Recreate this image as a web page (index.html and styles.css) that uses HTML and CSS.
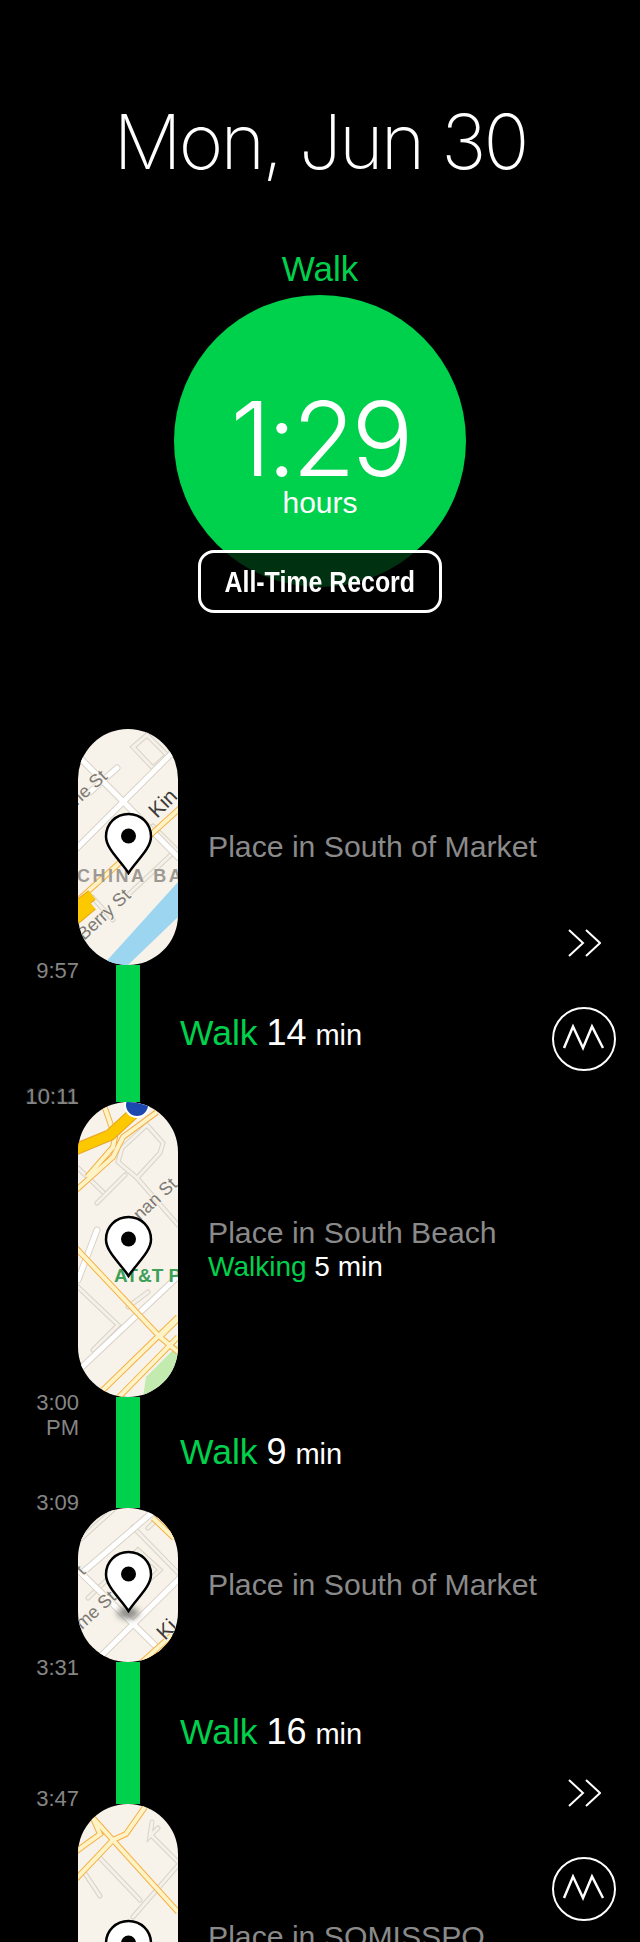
FILE: index.html
```html
<!DOCTYPE html>
<html lang="en">
<head>
<meta charset="utf-8">
<title>Mon, Jun 30</title>
<link rel="stylesheet" href="styles.css">
</head>
<body>
<main class="page">
  <header class="summary">
    <h1 class="date">Mon, Jun 30</h1>
    <div class="activity">Walk</div>
    <div class="dial">
      <div class="dial-value">1:29</div>
      <div class="dial-unit">hours</div>
    </div>
    <div class="record"><span class="record-text">All-Time Record</span></div>
  </header>

  <section class="timeline">
    <div class="rows">
      <div class="stop">
        <div class="pill">
          <svg class="map" width="100" height="236" viewBox="0 0 100 236">
            <defs>
              <path id="m1a" d="M110 8L-10 128M4 31L100 128M12 63L39 39"/>
              <path id="m1b" d="M55 18L69 6L89 26L75 39ZM14 168L35 191M50 166L98 121M75 97L100 122"/>
              <path id="m1c" d="M-4 175L110 72"/>
            </defs>
            <rect class="land" width="100" height="236"/>
            <use href="#m1b" class="minor-case"/><use href="#m1b" class="minor-fill"/>
            <use href="#m1a" class="major-case"/><use href="#m1a" class="major-fill"/>
            <use href="#m1c" class="artery-case"/><use href="#m1c" class="artery-fill"/>
            <path class="freeway-case" d="M-4 180L14 166M-4 191L14 176"/>
            <path class="freeway" d="M-4 180L14 166M-4 191L14 176"/>
            <polygon class="water" points="100,153 100,188 50,236 25,236"/>
            <text class="label label-area" x="-1" y="153">CHINA BA</text>
            <text class="label label-street" transform="translate(6 212) rotate(-43)">Berry St</text>
            <text class="label label-street" transform="translate(-1 77) rotate(-42)">ne St</text>
            <text class="label label-dark" transform="translate(79 90) rotate(-45)">Kin</text>
          </svg>
          <svg class="pin" width="49" height="63" viewBox="0 0 49 63"><path class="pin-body" d="M24.500 61C17 49 2 37 2 24.500C2 11.500 12 2 24.500 2C37 2 47 11.500 47 24.500C47 37 32 49 24.500 61Z"/><circle class="pin-dot" cx="24.500" cy="24" r="7.500"/></svg>
        </div>
        <div class="place">
          <div class="place-name">Place in South of Market</div>
        </div>
      </div>

      <div class="leg leg-a">
        <div class="times"><span>9:57</span><span class="time-ghost">10:11</span></div>
        <div class="bar"></div>
        <div class="leg-label"><span class="leg-kind">Walk</span> <span class="leg-num">14</span> <span class="leg-unit">min</span></div>
      </div>

      <div class="stop">
        <div class="pill">
          <svg class="map" width="100" height="295" viewBox="0 0 100 295">
            <defs>
              <path id="m2a" d="M4 265L110 165M0 178L19 128"/>
              <path id="m2b" d="M69 23L85 41L82 51L59 76L40 60L44 46ZM59 76L100 123M0 66L25 90M19 101L47 73M0 185L40 223L15 248M50 205L70 190"/>
              <path id="m2c" d="M-4 90L35 55L45 35L79 10M27 6L37 35L35 45L9 75M-4 144L82 235L100 250M25 288L100 215M40 296L100 235M82 235L100 217"/>
            </defs>
            <rect class="land" width="100" height="295"/>
            <polygon class="park" points="100,243 68,275 65,295 100,295"/>
            <use href="#m2b" class="minor-case"/><use href="#m2b" class="minor-fill"/>
            <use href="#m2a" class="major-case"/><use href="#m2a" class="major-fill"/>
            <use href="#m2c" class="artery-case"/><use href="#m2c" class="artery-fill"/>
            <path class="freeway-case" d="M-4 48L32 33L58 9"/>
            <path class="freeway" d="M-4 48L32 33L58 9"/>
            <circle class="shield-edge" cx="59" cy="3" r="13"/>
            <circle class="shield" cx="59" cy="3" r="11"/>
            <text class="label label-poi" x="36" y="180">AT&amp;T P</text>
            <text class="label label-street" transform="translate(62 119) rotate(-43)">nan St</text>
          </svg>
          <svg class="pin" width="49" height="63" viewBox="0 0 49 63"><path class="pin-body" d="M24.500 61C17 49 2 37 2 24.500C2 11.500 12 2 24.500 2C37 2 47 11.500 47 24.500C47 37 32 49 24.500 61Z"/><circle class="pin-dot" cx="24.500" cy="24" r="7.500"/></svg>
        </div>
        <div class="place">
          <div class="place-name">Place in South Beach</div>
          <div class="place-sub"><span class="leg-kind">Walking</span> 5 min</div>
        </div>
      </div>

      <div class="leg leg-b">
        <div class="times"><span>3:00<br>PM</span><span>3:09</span></div>
        <div class="bar"></div>
        <div class="leg-label"><span class="leg-kind">Walk</span> <span class="leg-num">9</span> <span class="leg-unit">min</span></div>
      </div>

      <div class="stop">
        <div class="pill">
          <svg class="map" width="100" height="154" viewBox="0 0 100 154">
            <defs>
              <path id="m3a" d="M-6 56L100 160M22 149L110 62M4 65L76 3"/>
              <path id="m3b" d="M55 19L100 65M-5 38L35 2M10 90L60 42L82 62L60 82M70 20L100 -8"/>
              <path id="m3c" d="M75 10L96 30M62 156L94 127"/>
            </defs>
            <rect class="land" width="100" height="154"/>
            <use href="#m3b" class="minor-case"/><use href="#m3b" class="minor-fill"/>
            <use href="#m3a" class="major-case"/><use href="#m3a" class="major-fill"/>
            <use href="#m3c" class="artery-case"/><use href="#m3c" class="artery-fill"/>
            <ellipse class="pin-shadow" cx="50" cy="105" rx="11" ry="6"/>
            <text class="label label-street" transform="translate(4 122) rotate(-42)">me St</text>
            <text class="label label-street" transform="translate(5 68) rotate(-45)">t</text>
            <text class="label label-dark" transform="translate(87 133) rotate(-45)">Ki</text>
          </svg>
          <svg class="pin" width="49" height="63" viewBox="0 0 49 63"><path class="pin-body" d="M24.500 61C17 49 2 37 2 24.500C2 11.500 12 2 24.500 2C37 2 47 11.500 47 24.500C47 37 32 49 24.500 61Z"/><circle class="pin-dot" cx="24.500" cy="24" r="7.500"/></svg>
        </div>
        <div class="place">
          <div class="place-name">Place in South of Market</div>
        </div>
      </div>

      <div class="leg leg-c">
        <div class="times"><span>3:31</span><span>3:47</span></div>
        <div class="bar"></div>
        <div class="leg-label"><span class="leg-kind">Walk</span> <span class="leg-num">16</span> <span class="leg-unit">min</span></div>
      </div>

      <div class="stop">
        <div class="pill">
          <svg class="map" width="100" height="300" viewBox="0 0 100 300">
            <defs>
              <path id="m4a" d="M21 53L62 96M55 113L110 50M6 68L22 92M74 18L72 32L80 24M72 30L100 58"/>
              <path id="m4c" d="M-4 77L35 36L48 30L67 3M15 14L100 108M-4 49L22 30L15 14"/>
            </defs>
            <rect class="land" width="100" height="300"/>
            <use href="#m4a" class="minor-case"/><use href="#m4a" class="minor-fill"/>
            <use href="#m4c" class="artery-case"/><use href="#m4c" class="artery-fill"/>
          </svg>
          <svg class="pin" width="49" height="63" viewBox="0 0 49 63"><path class="pin-body" d="M24.500 61C17 49 2 37 2 24.500C2 11.500 12 2 24.500 2C37 2 47 11.500 47 24.500C47 37 32 49 24.500 61Z"/><circle class="pin-dot" cx="24.500" cy="24" r="7.500"/></svg>
        </div>
        <div class="place">
          <div class="place-name">Place in SOMISSPO</div>
          <div class="place-sub">&nbsp;</div>
        </div>
      </div>
    </div>

    <aside class="rail">
      <div class="rail-group">
        <svg class="chevrons" width="33" height="28" viewBox="0 0 33 28"><path d="M1 1L15 14L1 27M18 1L32 14L18 27"/></svg>
        <svg class="mode" width="64" height="64" viewBox="0 0 64 64"><circle cx="32" cy="32" r="31"/><path d="M12 41L21 19.500L31 41L40 19.500L51 41"/></svg>
      </div>
      <div class="rail-group rail-group-next">
        <svg class="chevrons" width="33" height="28" viewBox="0 0 33 28"><path d="M1 1L15 14L1 27M18 1L32 14L18 27"/></svg>
        <svg class="mode" width="64" height="64" viewBox="0 0 64 64"><circle cx="32" cy="32" r="31"/><path d="M12 41L21 19.500L31 41L40 19.500L51 41"/></svg>
      </div>
    </aside>
  </section>
</main>
</body>
</html>
```

FILE: styles.css
```css
* { box-sizing: border-box; }

html, body {
  margin: 0;
  height: 1942px;
  overflow: hidden;
  background: #000;
}

body {
  font-family: "Liberation Sans", sans-serif;
  font-weight: 400;
  color: #fff;
}

.page { width: 640px; }

.summary {
  display: flex;
  flex-direction: column;
  align-items: center;
  padding-top: 96px;
}

.date {
  margin: 0;
  font-family: Inter, "Liberation Sans", sans-serif;
  font-size: 76px;
  font-weight: 150;
  line-height: 90px;
  letter-spacing: -2.800px;
}

.activity {
  margin-top: 56px;
  font-size: 35px;
  line-height: 53px;
  height: 53px;
  color: #00d14c;
}

.dial {
  width: 292px;
  height: 292px;
  border-radius: 50%;
  background: #00d14c;
  display: flex;
  flex-direction: column;
  align-items: center;
}

.dial-value {
  margin-top: 89px;
  font-family: Inter, "Liberation Sans", sans-serif;
  font-size: 103px;
  line-height: 110px;
  font-weight: 300;
  letter-spacing: -4px;
}

.dial-unit {
  margin-top: -9px;
  font-size: 30px;
  line-height: 36px;
}

.record {
  position: relative;
  width: 244px;
  height: 63px;
  margin-top: -37px;
  border: 3px solid #fff;
  border-radius: 16px;
  background: rgba(0, 0, 0, 0.76);
  display: flex;
  align-items: center;
  justify-content: center;
}

.record-text {
  display: inline-block;
  font-weight: 700;
  font-size: 30px;
  white-space: nowrap;
  transform: scaleX(0.83);
}

.timeline {
  display: flex;
  margin-top: 116px;
  padding-right: 24px;
}

.rows {
  flex: 1;
  min-width: 0;
  white-space: nowrap;
}

.stop {
  display: flex;
  align-items: center;
  padding-left: 78px;
  gap: 30px;
}

.pill {
  position: relative;
  flex: none;
  width: 100px;
  border-radius: 50px;
  overflow: hidden;
}

.map { display: block; }

.pin {
  position: absolute;
  left: 50%;
  top: 50%;
  margin-left: -24.500px;
  margin-top: -35px;
}

.pin-body {
  fill: #fff;
  stroke: #000;
  stroke-width: 2.500;
}

.pin-dot { fill: #000; }

.place-name {
  font-size: 30.200px;
  line-height: 34px;
  color: #8a8a8a;
}

.place-sub {
  font-size: 28px;
  line-height: 34px;
  color: #fff;
}

.leg {
  display: flex;
  align-items: center;
}

.leg-a { height: 137px; }
.leg-b { height: 111px; }
.leg-c { height: 142px; }

.times {
  flex: none;
  width: 79px;
  height: calc(100% + 14px);
  margin: -7px 0;
  display: flex;
  flex-direction: column;
  justify-content: space-between;
  align-items: flex-end;
  text-align: right;
  font-size: 22px;
  line-height: 25px;
  color: #858585;
}

.time-ghost { text-shadow: -1px -1px 0 rgba(133, 133, 133, 0.3); }

.bar {
  flex: none;
  align-self: stretch;
  width: 24px;
  margin-left: 37px;
  background: #00d14c;
}

.leg-label {
  margin-left: 40px;
  line-height: 40px;
  font-size: 32px;
}

.leg-kind { color: #00d14c; }
.leg-label .leg-kind { font-size: 35.500px; }
.leg-num { font-size: 36px; }
.leg-unit { font-size: 29px; }

.rail {
  flex: none;
  width: 64px;
  padding-top: 200px;
}

.rail-group {
  display: flex;
  flex-direction: column;
  align-items: center;
  gap: 50px;
}

.rail-group-next { margin-top: 708px; }

.chevrons path,
.mode path,
.mode circle {
  fill: none;
  stroke: #fff;
}

.chevrons path { stroke-width: 2; }
.mode circle { stroke-width: 2; }
.mode path { stroke-width: 2.500; }

.land { fill: #f8f3ea; }
.water { fill: #9cd5ef; }
.park { fill: #c3ebb0; }

.major-case, .major-fill,
.minor-case, .minor-fill,
.artery-case, .artery-fill,
.freeway, .freeway-case {
  fill: none;
}

.major-case { stroke: #d9d2c5; stroke-width: 7; stroke-linecap: round; }
.major-fill { stroke: #fff; stroke-width: 5; stroke-linecap: round; }
.minor-case { stroke: #d9d2c5; stroke-width: 5; stroke-linecap: round; }
.minor-fill { stroke: #f4f1ea; stroke-width: 3; stroke-linecap: round; }
.artery-case { stroke: #f5b04a; stroke-width: 6; }
.artery-fill { stroke: #fdf3c4; stroke-width: 4; }
.freeway-case { stroke: #e9a320; stroke-width: 12; stroke-linejoin: round; }
.freeway { stroke: #fcc800; stroke-width: 10; stroke-linejoin: round; }

.shield-edge { fill: #fff; }
.shield { fill: #1b49b0; }

.pin-shadow {
  fill: #8b8a86;
  filter: blur(3px);
}

.label-area {
  font-size: 18px;
  font-weight: 700;
  letter-spacing: 2.500px;
  fill: #9d9a94;
}

.label-street {
  font-size: 18px;
  fill: #7d7a75;
  stroke: #f8f3ea;
  stroke-width: 2px;
  paint-order: stroke;
}

.label-dark {
  font-size: 21px;
  fill: #3c3a38;
  stroke: #f8f3ea;
  stroke-width: 2px;
  paint-order: stroke;
}

.label-poi {
  font-size: 19px;
  font-weight: 700;
  fill: #3d9f58;
}
```
